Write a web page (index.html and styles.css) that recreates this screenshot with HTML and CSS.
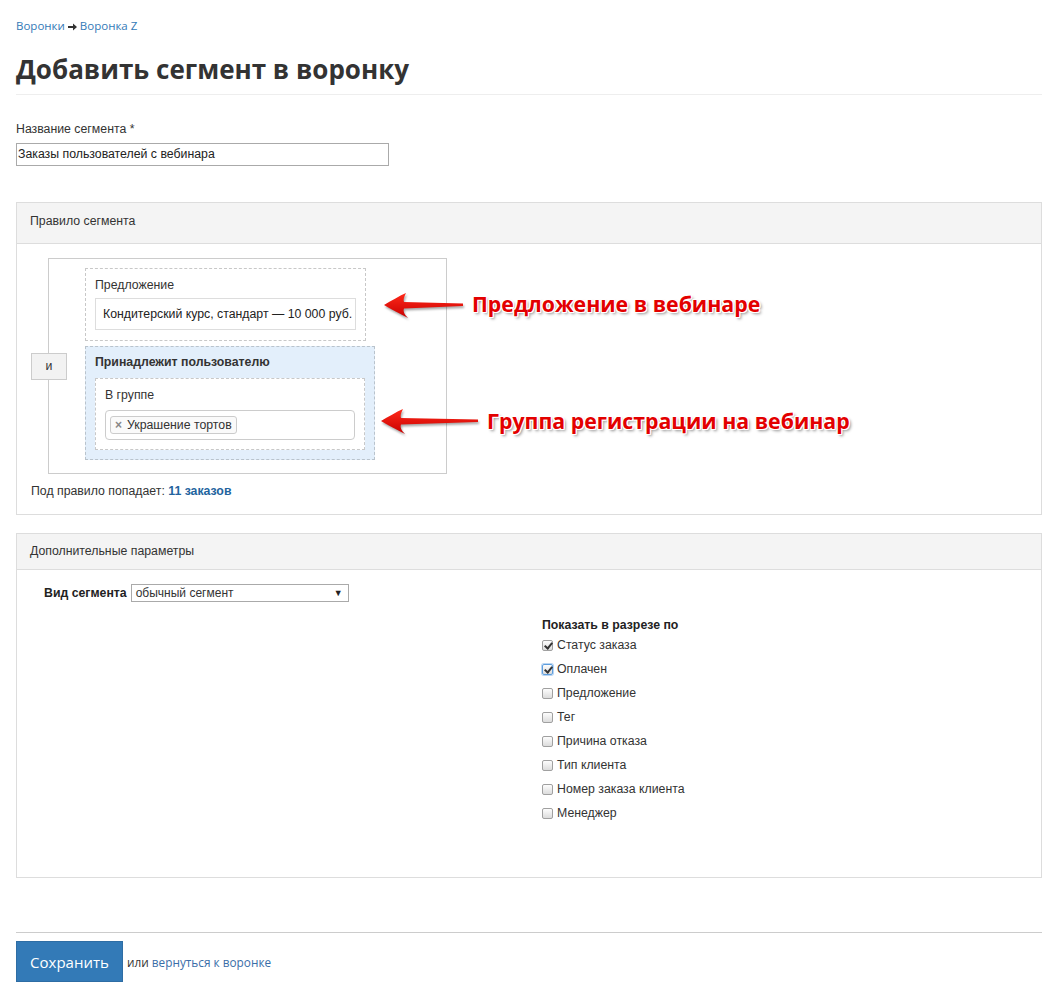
FILE: index.html
```html
<!DOCTYPE html>
<html lang="ru">
<head>
<meta charset="utf-8">
<title>Добавить сегмент в воронку</title>
<link rel="stylesheet" href="styles.css">
</head>
<body>
<div class="page">
  <div class="crumbs">
    <a class="link" href="#">Воронки</a>
    <svg class="crumb-arrow" width="9" height="8" viewBox="0 0 9 8"><path d="M0 3h5V0.5L9 4 5 7.5V5H0z" fill="#333"/></svg>
    <a class="link" href="#">Воронка Z</a>
  </div>
  <h1 class="title">Добавить сегмент в воронку</h1>

  <div class="field">
    <div class="field-label">Название сегмента *</div>
    <div class="text-input">Заказы пользователей с вебинара</div>
  </div>

  <div class="panel panel-rule">
    <div class="panel-head panel-head-tall">Правило сегмента</div>
    <div class="panel-body">
      <div class="rule-box">
        <div class="and-btn">и</div>
        <div class="cond">
          <div class="cond-label">Предложение</div>
          <div class="cond-input">Кондитерский курс, стандарт — 10 000 руб.</div>
        </div>
        <div class="group">
          <div class="group-title">Принадлежит пользователю</div>
          <div class="cond cond-inner">
            <div class="cond-label">В группе</div>
            <div class="tag-input"><span class="tag"><span class="tag-x">×</span>Украшение тортов</span></div>
          </div>
        </div>

        <svg class="note-arrow arrow-1" width="81" height="27" viewBox="0 0 81 27">
          <defs><linearGradient id="ag1" x1="0" y1="0" x2="0" y2="1"><stop offset="0" stop-color="#ff2a1a"/><stop offset="1" stop-color="#c80000"/></linearGradient></defs>
          <path d="M1,13 C8,9 16,4 23,1 C21,5 20,8 21,10 L80,11.5 L80,14 L21,16.5 C20,19 21,22 25,26 C17,22 8,17 1,13 Z" fill="url(#ag1)"/>
        </svg>
        <div class="note note-1">Предложение в вебинаре</div>

        <svg class="note-arrow arrow-2" width="99" height="27" viewBox="0 0 99 27">
          <defs><linearGradient id="ag2" x1="0" y1="0" x2="0" y2="1"><stop offset="0" stop-color="#ff2a1a"/><stop offset="1" stop-color="#c80000"/></linearGradient></defs>
          <path d="M1,13 C8,9 16,4 23,1 C21,5 20,8 21,10 L98,11.5 L98,14 L21,16.5 C20,19 21,22 25,26 C17,22 8,17 1,13 Z" fill="url(#ag2)"/>
        </svg>
        <div class="note note-2">Группа регистрации на вебинар</div>
      </div>
      <div class="count">Под правило попадает: <a class="link link-bold" href="#">11 заказов</a></div>
    </div>
  </div>

  <div class="panel panel-extra">
    <div class="panel-head">Дополнительные параметры</div>
    <div class="panel-body">
      <div class="extra-row">
        <span class="extra-label">Вид сегмента</span>
        <span class="select">обычный сегмент<span class="select-caret">▼</span></span>
      </div>
      <div class="extra-cols">
        <div class="col"></div>
        <div class="col">
          <div class="cols-title">Показать в разрезе по</div>
          <div class="check"><span class="box checked"></span>Статус заказа</div>
          <div class="check"><span class="box checked focused"></span>Оплачен</div>
          <div class="check"><span class="box"></span>Предложение</div>
          <div class="check"><span class="box"></span>Тег</div>
          <div class="check"><span class="box"></span>Причина отказа</div>
          <div class="check"><span class="box"></span>Тип клиента</div>
          <div class="check"><span class="box"></span>Номер заказа клиента</div>
          <div class="check"><span class="box"></span>Менеджер</div>
        </div>
      </div>
    </div>
  </div>

  <div class="actions">
    <button class="btn-save" type="button">Сохранить</button>
    <span class="alt">или <a class="link link-back" href="#">вернуться к воронке</a></span>
  </div>
</div>
</body>
</html>
```

FILE: styles.css
```css
* { box-sizing: border-box; }

body {
  margin: 0;
  background: #fff;
  color: #333;
  font-family: "Liberation Sans", Arial, sans-serif;
  font-size: 12.3px;
}

.page {
  width: 1042px;
  padding: 17px 0 0 16px;
}

.link { color: #337ab7; text-decoration: none; }
.link-bold { font-weight: bold; color: #23649e; }

.crumbs {
  font-family: "Open Sans", "Noto Sans", sans-serif;
  font-size: 11.5px;
  line-height: 18px;
  height: 18px;
  display: flex;
  align-items: center;
  gap: 3px;
}
.crumb-arrow { margin-top: 1px; }

.title {
  margin: 18px 0 0;
  padding-bottom: 9px;
  border-bottom: 1px solid #eee;
  font-family: "Open Sans", "Noto Sans", sans-serif;
  font-weight: 700;
  font-size: 26px;
  line-height: 32px;
  color: #333;
}

.field { margin-top: 26px; }
.field-label { line-height: 16px; }
.text-input {
  margin-top: 6px;
  width: 373px;
  height: 23px;
  border: 1px solid #aaa;
  padding: 0 1px;
  line-height: 21px;
  color: #222;
}

.panel {
  width: 1026px;
  border: 1px solid #ddd;
}
.panel-rule { margin-top: 36px; }
.panel-extra { margin-top: 18px; }

.panel-head {
  background: #f4f4f4;
  border-bottom: 1px solid #ddd;
  height: 36px;
  padding: 9px 13px 0;
  line-height: 17px;
  color: #333;
}
.panel-head-tall { height: 41px; padding-top: 10px; }

.panel-body { padding: 14px 14px 15px; }

.rule-box {
  position: relative;
  margin-left: 17px;
  width: 399px;
  height: 216px;
  border: 1px solid #ccc;
  padding: 9px 0 0 36px;
}

.and-btn {
  position: absolute;
  left: -18px;
  top: 94px;
  width: 36px;
  height: 27px;
  background: #f2f2f2;
  border: 1px solid #ccc;
  text-align: center;
  line-height: 25px;
  color: #333;
}

.cond {
  width: fit-content;
  border: 1px dashed #c8c8c8;
  padding: 9px 9px 10px;
}
.cond-label { line-height: 15px; }
.cond-input {
  margin-top: 5px;
  width: 261px;
  height: 32px;
  border: 1px solid #ddd;
  padding: 0 7px;
  line-height: 30px;
  white-space: nowrap;
  color: #222;
  background: #fff;
}

.group {
  margin-top: 5px;
  width: 290px;
  background: #e3effb;
  border: 1px dashed #b9c3cc;
  padding: 7px 9px 9px;
}
.group-title {
  font-weight: bold;
  line-height: 16px;
  color: #333;
}
.cond-inner {
  margin-top: 8px;
  width: 270px;
  background: #fff;
  padding-bottom: 9px;
}

.tag-input {
  margin-top: 7px;
  width: 250px;
  height: 30px;
  border: 1px solid #ccc;
  border-radius: 4px;
  padding: 5px 4px;
  display: flex;
}
.tag {
  display: inline-flex;
  align-items: center;
  height: 18px;
  border: 1px solid #ccc;
  border-radius: 3px;
  background: #fafafa;
  padding: 0 4px 0 4px;
  color: #333;
  line-height: 16px;
}
.tag-x {
  font-weight: bold;
  color: #888;
  font-size: 12px;
  margin-right: 5px;
}

.note-arrow {
  position: absolute;
  filter: drop-shadow(1px 2px 1px rgba(0, 0, 0, 0.35));
}
.arrow-1 { left: 334px; top: 33px; }
.arrow-2 { left: 331px; top: 149px; }

.note {
  position: absolute;
  white-space: nowrap;
  font-family: "Open Sans", "Noto Sans", sans-serif;
  font-weight: 700;
  font-size: 21.3px;
  line-height: 28px;
  color: #e30000;
  text-shadow:
    -1px -1px 0 #fff, 1px -1px 0 #fff, -1px 1px 0 #fff, 1px 1px 0 #fff,
    0 -1px 0 #fff, 0 1px 0 #fff, -1px 0 0 #fff, 1px 0 0 #fff,
    2px 2px 3px rgba(0, 0, 0, 0.45);
}
.note-1 { left: 423px; top: 31px; }
.note-2 { left: 438px; top: 148px; }

.count {
  margin-top: 9px;
  line-height: 16px;
}

.extra-row {
  padding-left: 13px;
  display: flex;
  align-items: center;
  gap: 4px;
  height: 18px;
}
.extra-label { font-weight: bold; color: #222; }
.select {
  position: relative;
  width: 218px;
  height: 18px;
  border: 1px solid #aaa;
  padding: 0 4px;
  font-size: 12px;
  line-height: 16px;
  color: #333;
  background: #fff;
}
.select-caret {
  position: absolute;
  right: 5px;
  top: 0;
  font-size: 9px;
  color: #222;
}

.extra-cols {
  display: grid;
  grid-template-columns: 1fr 1fr;
  margin-top: 15px;
  padding-bottom: 37px;
}
.col { padding: 0 13px; }
.cols-title {
  font-weight: bold;
  line-height: 16px;
  color: #222;
}
.check {
  display: flex;
  align-items: center;
  height: 24px;
  color: #333;
}
.box {
  width: 11px;
  height: 11px;
  margin-right: 4px;
  border: 1px solid #a0a0a0;
  border-radius: 2px;
  background: linear-gradient(#fdfdfd, #dcdcdc);
  position: relative;
}
.box.checked::after {
  content: "";
  position: absolute;
  left: 3px;
  top: 0px;
  width: 3px;
  height: 6px;
  border-right: 2px solid #333;
  border-bottom: 2px solid #333;
  transform: rotate(40deg);
}
.box.focused {
  border-color: #5d9ddd;
  box-shadow: 0 0 0 1px #b9d5f2;
}

.actions {
  margin-top: 54px;
  width: 1026px;
  border-top: 1px solid #ccc;
  padding-top: 8px;
  display: flex;
  align-items: center;
  gap: 4px;
}
.btn-save {
  width: 107px;
  height: 41px;
  background: #337ab7;
  border: 1px solid #2e6da4;
  color: #fff;
  font-family: "Open Sans", "Noto Sans", sans-serif;
  font-size: 15px;
  padding: 0;
}
.alt {
  font-family: "Open Sans", "Noto Sans", sans-serif;
  font-size: 11.8px;
  color: #333;
}
.link-back { color: #3a6ea8; }
```
